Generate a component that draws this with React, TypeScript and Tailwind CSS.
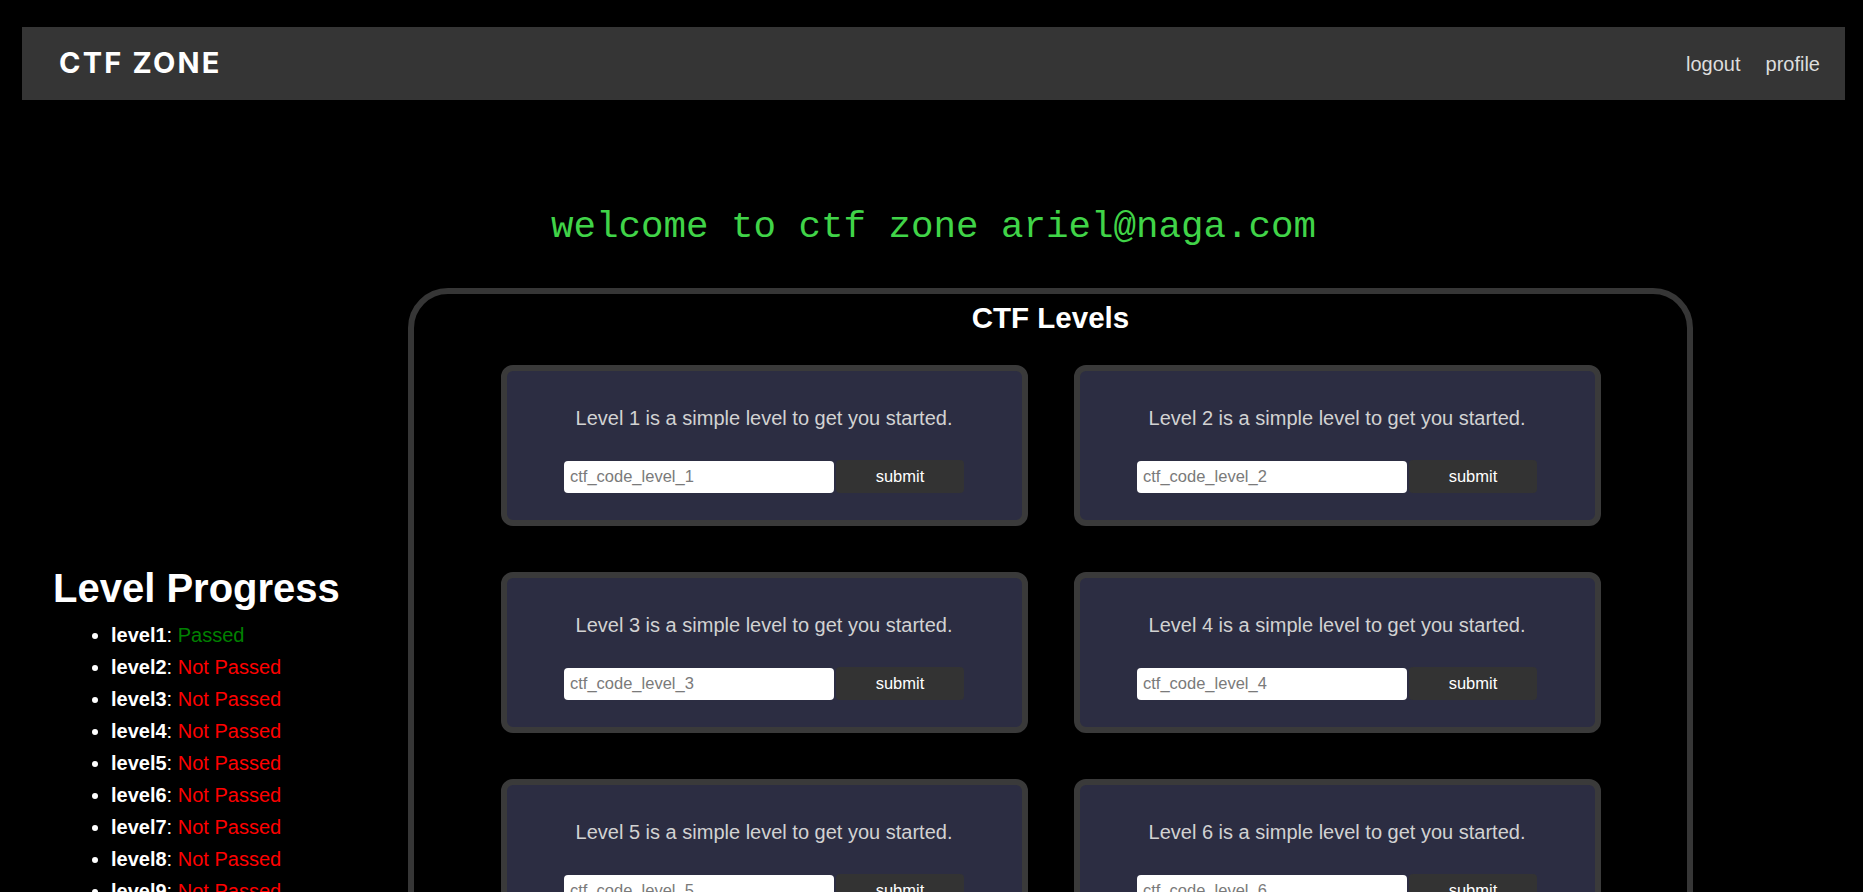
import React from "react";

const levels = Array.from({ length: 10 }, (_, i) => i + 1);

function LevelCard({ n }: { n: number }) {
  return (
    <div className="flex h-[161px] w-[527px] flex-col items-center rounded-[12px] border-[6px] border-[#3a3a3a] bg-[#2c2d42] pt-[36px]">
      <p className="text-[20px] leading-[23px] text-[#d2d2d2]">
        Level {n} is a simple level to get you started.
      </p>
      <div className="mt-[30px] flex items-center gap-[2px]">
        <input
          type="text"
          placeholder={`ctf_code_level_${n}`}
          className="h-[32px] w-[270px] rounded-[4px] bg-white pl-[6px] text-[16.5px] text-black outline-none placeholder:text-[#7a7a7a]"
          style={{ fontFamily: '"Liberation Sans", Arial, sans-serif' }}
        />
        <button
          className="h-[33px] w-[128px] rounded-[4px] bg-[#333333] text-[16.5px] text-white"
          style={{ fontFamily: '"Liberation Sans", Arial, sans-serif' }}
        >
          submit
        </button>
      </div>
    </div>
  );
}

export default function App() {
  return (
    <div
      className="min-h-screen bg-black pt-[27px]"
      style={{ fontFamily: '"Liberation Sans", Arial, sans-serif' }}
    >
      <header className="ml-[22px] mr-[18px] flex h-[73px] items-center justify-between bg-[#353535] pl-[37px] pr-[25px]">
        <div
          className="-mt-[3px] text-[29px] font-bold leading-none tracking-[2.2px] text-white"
          style={{ fontFamily: 'Inter, "Noto Sans", sans-serif' }}
        >
          CTF ZONE
        </div>
        <nav className="flex items-center gap-[25px] text-[20px] text-[#dddddd]">
          <a href="#">logout</a>
          <a href="#">profile</a>
        </nav>
      </header>

      <h1
        className="mt-[105px] pl-[4px] text-center text-[37.5px] font-normal leading-[44px] text-[#40d448]"
        style={{ fontFamily: '"Liberation Mono", "Courier New", monospace' }}
      >
        welcome to ctf zone ariel@naga.com
      </h1>

      <div className="mt-[39px] flex items-start">
        <aside className="w-[408px] shrink-0 pl-[53px] pt-[277px]">
          <h2 className="text-[40px] font-bold leading-[46px] text-white">Level Progress</h2>
          <ul className="mt-[8px] list-disc pl-[58px] text-[20px] leading-[32px] text-white">
            {levels.map((n) => (
              <li key={n}>
                <span className="font-bold">level{n}</span>:{" "}
                {n === 1 ? (
                  <span className="text-[#008000]">Passed</span>
                ) : (
                  <span className="text-[#ff0000]">Not Passed</span>
                )}
              </li>
            ))}
          </ul>
        </aside>

        <section className="w-[1285px] shrink-0 rounded-[40px] border-[6px] border-[#363636] pb-[40px] pt-[7px]">
          <h2 className="text-center text-[29.5px] font-bold leading-[34px] text-white">CTF Levels</h2>
          <div className="mt-[30px] grid grid-cols-[527px_527px] justify-center gap-x-[46px] gap-y-[46px]">
            {levels.map((n) => (
              <LevelCard key={n} n={n} />
            ))}
          </div>
        </section>
      </div>
    </div>
  );
}
